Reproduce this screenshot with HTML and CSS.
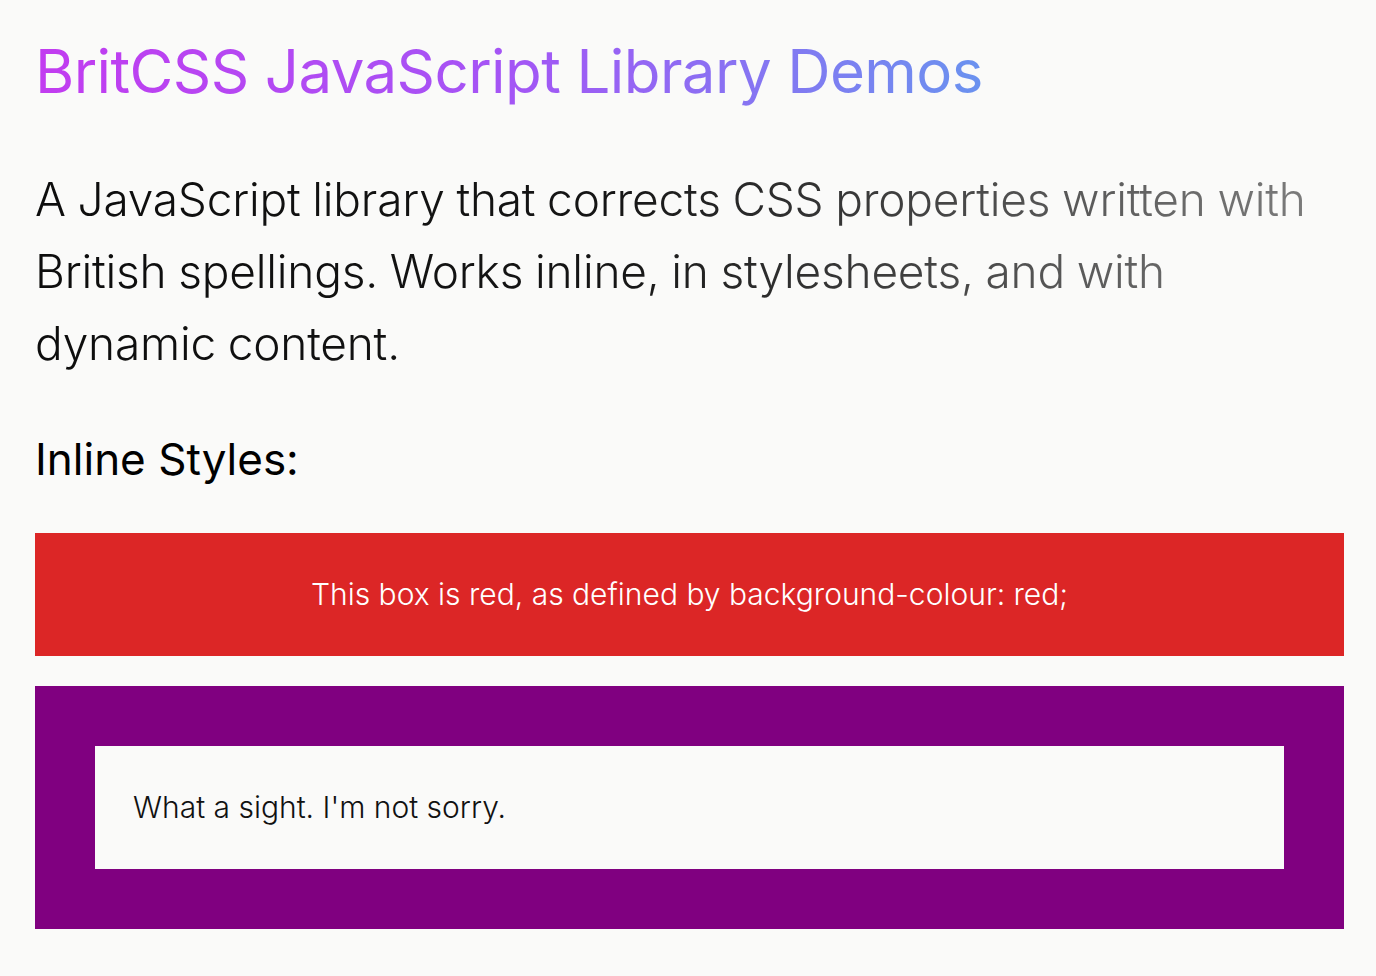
FILE: index.html
```html
<!DOCTYPE html>
<html lang="en">
<head>
<meta charset="utf-8">
<title>BritCSS JavaScript Library Demos</title>
<link rel="stylesheet" href="styles.css">
</head>
<body>
<main class="page">
  <h1 class="title"><span class="title-text">BritCSS JavaScript Library Demos</span></h1>
  <p class="intro">A JavaScript library that corrects CSS properties written with British spellings. Works inline, in stylesheets, and with dynamic content.</p>
  <h2 class="section-title">Inline Styles:</h2>
  <div class="red-box">This box is red, as defined by background-colour: red;</div>
  <div class="purple-box">
    <div class="inner-box">What a sight. I'm not sorry.</div>
  </div>
</main>
</body>
</html>
```

FILE: styles.css
```css
* { box-sizing: border-box; }

html, body {
  margin: 0;
  padding: 0;
  background: #fafaf9;
}

body {
  font-family: Inter, "Noto Sans", "Liberation Sans", sans-serif;
  color: #111;
}

.page {
  padding: 35px 32px 40px 35px;
}

.title {
  margin: 0;
  font-size: 60px;
  line-height: 72px;
  font-weight: 400;
  letter-spacing: -0.6px;
}

.title-text {
  display: inline-block;
  background: linear-gradient(90deg, #c23cf0 0%, #a455f5 50%, #6a92ef 100%);
  -webkit-background-clip: text;
  background-clip: text;
  color: transparent;
}

.intro {
  margin: 56px 0 0 0;
  max-width: 1279px;
  font-size: 46px;
  line-height: 72px;
  font-weight: 300;
  letter-spacing: -0.2px;
  word-spacing: -1px;
  background: linear-gradient(90deg, #0d0d0d 0%, #151515 45%, #3a3a3a 65%, #7c7c7c 100%);
  -webkit-background-clip: text;
  background-clip: text;
  color: transparent;
}

.section-title {
  margin: 54px 0 0 0;
  font-size: 44px;
  line-height: 1.2;
  font-weight: 400;
  color: #000;
}

.red-box {
  margin-top: 47px;
  background: #dc2626;
  color: #fff;
  text-align: center;
  padding: 40px;
  font-size: 30px;
  line-height: 43px;
  font-weight: 300;
}

.purple-box {
  margin-top: 30px;
  background: #800080;
  padding: 60px;
}

.inner-box {
  background: #fafaf9;
  padding: 40px 38px;
  font-size: 30px;
  line-height: 43px;
  font-weight: 300;
  color: #111;
}
```
